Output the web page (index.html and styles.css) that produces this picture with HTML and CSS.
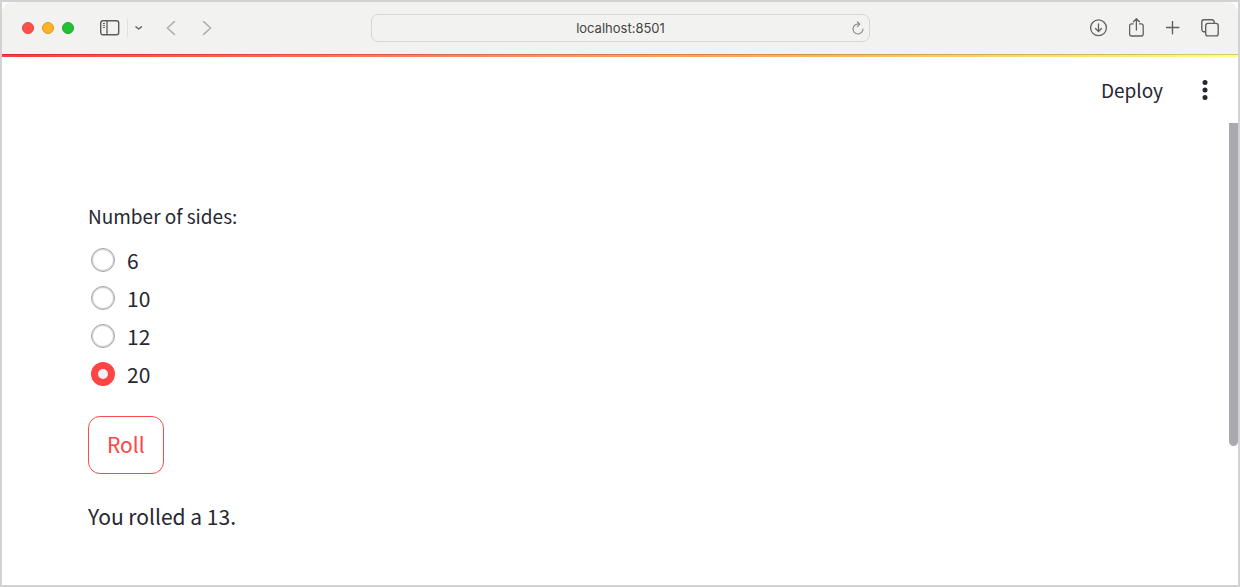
FILE: index.html
```html
<!DOCTYPE html>
<html lang="en">
<head>
<meta charset="utf-8">
<title>Dice roller</title>
<link rel="stylesheet" href="styles.css">
</head>
<body>
<div class="window">
  <header class="toolbar">
    <div class="toolbar-left">
      <div class="lights">
        <span class="light light-close"></span>
        <span class="light light-min"></span>
        <span class="light light-max"></span>
      </div>
      <button class="tool tool-sidebar" aria-label="Sidebar">
        <svg width="20" height="16" viewBox="0 0 20 16" fill="none" stroke="#5c5b59"><rect x=".7" y=".7" width="18" height="14" rx="2.2" stroke-width="1.4"/><path d="M7 1v14" stroke-width="1.3"/><path d="M2.800 3.500h2.200M2.800 5.500h2.200M2.800 7.500h2.200" stroke-width=".9"/></svg>
      </button>
      <span class="divider"></span>
      <button class="tool tool-menu" aria-label="Tab groups">
        <svg width="8" height="6" viewBox="0 0 8 6" fill="none" stroke="#6b6b69" stroke-width="1.5" stroke-linecap="round" stroke-linejoin="round"><path d="M1 1.800l2.700 2.200 2.700-2.200"/></svg>
      </button>
      <button class="tool tool-back" aria-label="Back">
        <svg width="10" height="16" viewBox="0 0 10 16" fill="none" stroke="#b0b0ae" stroke-width="1.6" stroke-linecap="round" stroke-linejoin="round"><path d="M8.400 1.600L1.400 8l7 6.400"/></svg>
      </button>
      <button class="tool tool-forward" aria-label="Forward">
        <svg width="10" height="16" viewBox="0 0 10 16" fill="none" stroke="#b0b0ae" stroke-width="1.6" stroke-linecap="round" stroke-linejoin="round"><path d="M1.600 1.600l7 6.400-7 6.400"/></svg>
      </button>
    </div>
    <div class="address">
      <span class="address-text">localhost:8501</span>
      <button class="tool" aria-label="Reload">
        <svg width="12" height="14" viewBox="0 0 12 14" fill="none" stroke="#858583" stroke-width="1.1" stroke-linecap="round" stroke-linejoin="round"><path d="M7.400 3.200A5 5 0 1 0 11 8M5.300 .8l2.500 2.400-2.500 2.400"/></svg>
      </button>
    </div>
    <div class="toolbar-right">
      <button class="tool" aria-label="Downloads">
        <svg width="18" height="18" viewBox="0 0 18 18" fill="none" stroke="#62615f" stroke-width="1.3" stroke-linecap="round" stroke-linejoin="round"><circle cx="8.500" cy="8.800" r="7.900"/><path d="M8.500 5v7.400M5.500 9.500l3 3 3-3"/></svg>
      </button>
      <button class="tool" aria-label="Share">
        <svg width="16" height="20" viewBox="0 0 16 20" fill="none" stroke="#62615f" stroke-width="1.3" stroke-linecap="round" stroke-linejoin="round"><path d="M4.200 5.800H2.600a2 2 0 0 0-2 2v8.200a2 2 0 0 0 2 2h9.600a2 2 0 0 0 2-2V7.800a2 2 0 0 0-2-2h-1.600M7.400 12V.900M4.400 3.700L7.400 .8l3 2.900"/></svg>
      </button>
      <button class="tool" aria-label="New tab">
        <svg width="14" height="14" viewBox="0 0 14 14" fill="none" stroke="#62615f" stroke-width="1.4" stroke-linecap="round"><path d="M6.500 .2v12.600M.2 6.500h12.600"/></svg>
      </button>
      <button class="tool" aria-label="Tab overview">
        <svg width="18" height="18" viewBox="0 0 18 18" fill="none" stroke="#62615f" stroke-width="1.4" stroke-linejoin="round"><path d="M4.700 12.700H3A2.200 2.200 0 0 1 .8 10.500V3A2.200 2.200 0 0 1 3 .8h8A2.200 2.200 0 0 1 13.200 3v1.400"/><rect x="4.700" y="4.400" width="12.500" height="12.500" rx="2.200"/></svg>
      </button>
    </div>
  </header>
  <div class="rainbow"></div>
  <div class="app-header">
    <button class="deploy">Deploy</button>
    <button class="tool" aria-label="Main menu">
      <svg width="6" height="20" viewBox="0 0 6 20" fill="#262730"><circle cx="3" cy="2.500" r="2.500"/><circle cx="3" cy="10" r="2.500"/><circle cx="3" cy="17.500" r="2.500"/></svg>
    </button>
  </div>
  <main class="app">
    <fieldset class="sides">
      <legend class="sides-label">Number of sides:</legend>
      <label class="option"><input class="radio" type="radio" name="sides" value="6">6</label>
      <label class="option"><input class="radio" type="radio" name="sides" value="10">10</label>
      <label class="option"><input class="radio" type="radio" name="sides" value="12">12</label>
      <label class="option"><input class="radio" type="radio" name="sides" value="20" checked>20</label>
    </fieldset>
    <button class="roll">Roll</button>
    <p class="result">You rolled a 13.</p>
    <div class="scroll-thumb"></div>
  </main>
</div>
</body>
</html>
```
FILE: styles.css
```css
* {
  box-sizing: border-box;
}

body {
  margin: 0;
  color: #262730;
  background: #fff;
  font-family: "Noto Sans CJK SC", "Noto Sans", sans-serif;
}

button {
  padding: 0;
  border: 0;
  background: none;
  color: inherit;
  font-family: inherit;
}

.window {
  display: flex;
  flex-direction: column;
  min-height: 100vh;
  border: 2px solid #d2d2d2;
}

.toolbar {
  display: grid;
  grid-template-columns: 1fr minmax(200px, 499px) 1fr;
  align-items: center;
  height: 52px;
  padding: 0 19px 0 20px;
  border-radius: 10px 10px 0 0;
  background: #f2f2f0;
}

.toolbar-left,
.lights,
.toolbar-right {
  display: flex;
  align-items: center;
}

.lights {
  gap: 8px;
}

.light {
  width: 12px;
  height: 12px;
  border: 1px solid #e0443e;
  border-radius: 50%;
  background: #ff5149;
}

.light-min {
  border-color: #dc9a22;
  background: #fdb328;
}

.light-max {
  border-color: #1aab29;
  background: #24c138;
}

.tool {
  display: flex;
  align-items: center;
}

.tool-sidebar {
  margin-left: 26px;
}

.divider {
  width: 1px;
  height: 18px;
  margin: 0 7px;
  background: #e0e0de;
}

.tool-back {
  margin-left: 23px;
}

.tool-forward {
  margin-left: 26px;
}

.address {
  display: flex;
  align-items: center;
  height: 28px;
  padding: 0 5px 0 17px;
  border: 1px solid #d6d6d4;
  border-radius: 7px;
}

.address-text {
  flex: 1;
  color: #454543;
  font: 13px/16px Inter, "Liberation Sans", sans-serif;
  text-align: center;
}

.toolbar-right {
  justify-content: flex-end;
  gap: 21px;
}

.rainbow {
  height: 3px;
  border-top: 1px solid rgba(0, 0, 0, 0.18);
  background: linear-gradient(90deg, #ff3b3b, #ff8a5c 40%, #ffb05c 65%, #fffd80) border-box;
}

.app-header {
  display: flex;
  align-items: center;
  justify-content: flex-end;
  gap: 39px;
  height: 66px;
  padding-right: 30px;
}

.deploy {
  font-size: 19px;
  line-height: 28px;
}

.app {
  position: relative;
  display: flex;
  flex: 1;
  flex-direction: column;
  align-items: flex-start;
  padding: 79px 86px 32px;
}

.sides {
  margin: 0;
  padding: 0;
  border: 0;
}

.sides-label {
  margin-bottom: 11px;
  padding: 0;
  font-size: 19px;
  line-height: 28px;
}

.option {
  display: flex;
  align-items: center;
  gap: 12px;
  height: 38px;
  padding-left: 3px;
  font-size: 21px;
  line-height: 38px;
}

.radio {
  appearance: none;
  width: 24px;
  height: 24px;
  margin: 0;
  border: 1px solid #a3a4a8;
  border-radius: 50%;
  background: #fff;
  box-shadow: inset 0 0 1px 1px #d0d1d4;
}

.radio:checked {
  border: 7px solid #ff4444;
  background: #f0f2f6;
  box-shadow: none;
}

.roll {
  height: 58px;
  margin-top: 23px;
  padding: 0 18px 2px;
  border: 1px solid #ff4b4b;
  border-radius: 12px;
  color: #ff4444;
  font-size: 21px;
  line-height: 32px;
}

.result {
  margin: 24px 0 0;
  font-size: 21px;
  line-height: 36px;
}

.scroll-thumb {
  position: absolute;
  top: 0;
  right: 0;
  width: 9px;
  height: 70%;
  border-radius: 0 0 5px 5px;
  background: #a9aaaf;
}
```
